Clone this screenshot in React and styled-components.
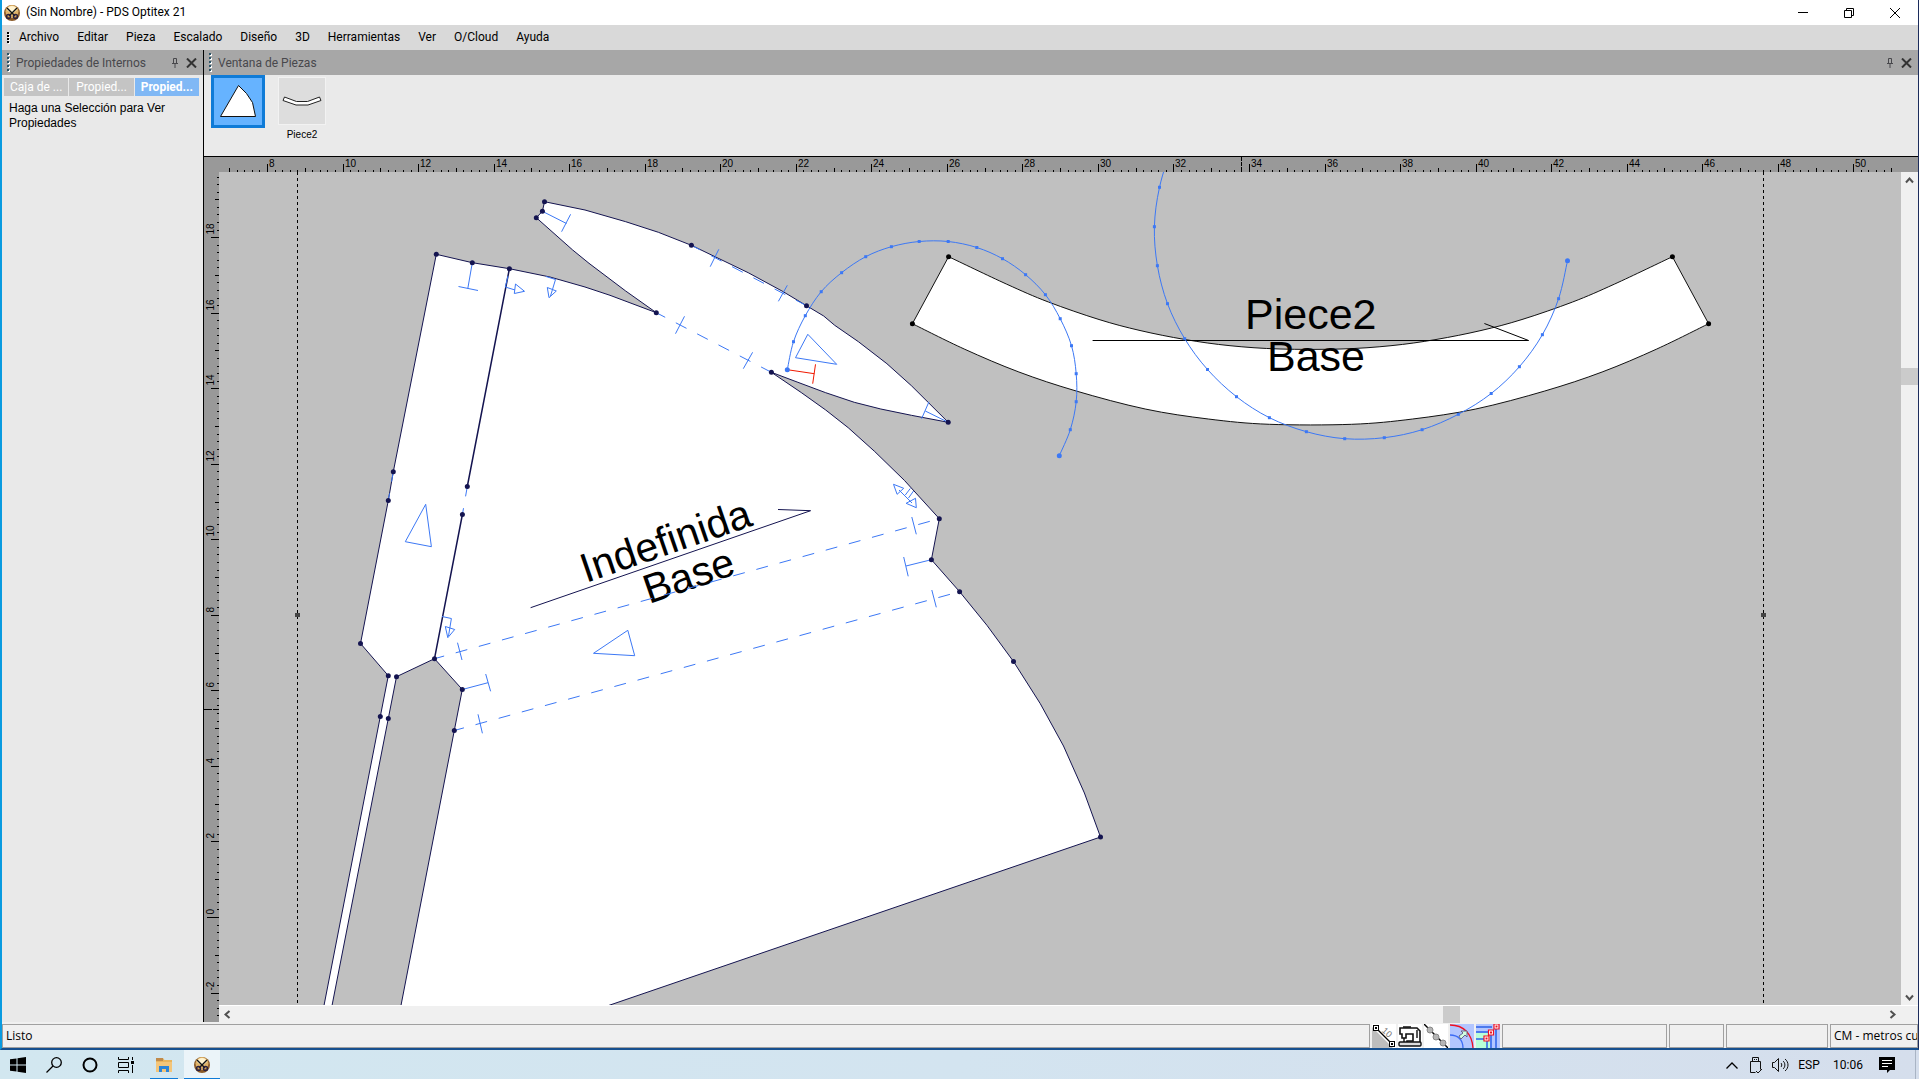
import styled, { createGlobalStyle } from 'styled-components'

const colors = {
    navy: '#141450',
    blue: '#3c78f5',
    canvas: '#c0c0c0',
    ruler: '#999999',
    panel: '#e9e9e9',
    bar: '#d9d9d9',
    header: '#a7a7a7',
    headerText: '#48484c',
    scroll: '#f0f0f0',
}

const GlobalStyle = createGlobalStyle`
    * {
        box-sizing: border-box;
    }
    body {
        margin: 0;
        overflow: hidden;
        font-family: Roboto, 'Open Sans', sans-serif;
        font-size: 12px;
        color: #000;
    }
    button {
        margin: 0;
        padding: 0;
        border: none;
        background: none;
        font: inherit;
        color: inherit;
    }
    svg {
        display: block;
    }
`

const Desktop = styled.div`
    display: flex;
    flex-direction: column;
    height: 100vh;
`

const Window = styled.div`
    flex: 1;
    min-height: 0;
    display: flex;
    flex-direction: column;
    border-left: 2px solid #0a9be0;
    border-right: 1px solid #1c2c5c;
    border-bottom: 2px solid #17508f;
    background: ${colors.scroll};
`

const TitleBar = styled.header`
    display: flex;
    align-items: center;
    height: 25px;
    padding-left: 2px;
    background: #fff;
`

const Title = styled.h1`
    flex: 1;
    margin: 0 0 0 6px;
    font-size: 12px;
    font-weight: 400;
    line-height: 25px;
`

const WindowButton = styled.button`
    width: 46px;
    height: 25px;
    display: flex;
    align-items: center;
    justify-content: center;
`

const MenuBar = styled.nav`
    display: flex;
    align-items: center;
    height: 25px;
    padding-left: 4px;
    background: ${colors.bar};
`

const MenuItem = styled.button`
    padding: 0 9px;
    line-height: 25px;
`

const Body = styled.main`
    flex: 1;
    min-height: 0;
    display: flex;
`

const SidePanel = styled.aside`
    width: 201px;
    background: ${colors.panel};
`

const PanelHeader = styled.div`
    display: flex;
    align-items: center;
    height: 25px;
    padding: 0 3px 0 4px;
    background: ${colors.header};
    color: ${colors.headerText};
`

const PanelTitle = styled.h2`
    flex: 1;
    margin: 0 0 0 6px;
    font-size: 12px;
    font-weight: 400;
    white-space: nowrap;
`

const PanelButton = styled.button`
    display: flex;
    align-items: center;
    justify-content: center;
    width: 17px;
    height: 17px;
    color: ${colors.headerText};
`

const Tabs = styled.div`
    display: flex;
    gap: 1px;
    padding: 3px 4px 0 2px;
`

const Tab = styled.button`
    flex: 1;
    height: 18px;
    line-height: 18px;
    color: #fff;
    background: ${({ $active }) => ($active ? '#80b8f5' : '#c4c4c4')};
    font-weight: ${({ $active }) => ($active ? 700 : 400)};
`

const Hint = styled.p`
    margin: 5px 7px;
    font-family: 'Liberation Sans', Arial, sans-serif;
    font-size: 12px;
    line-height: 15px;
`

const WorkArea = styled.section`
    flex: 1;
    min-width: 0;
    display: flex;
    flex-direction: column;
    border-left: 1px solid #000;
`

const PieceStrip = styled.div`
    display: flex;
    gap: 13px;
    height: 82px;
    padding-left: 7px;
    background: #eaeaea;
    border-bottom: 1px solid #000;
`

const PieceButton = styled.button`
    display: flex;
    flex-direction: column;
    align-items: center;
    align-self: flex-start;
    gap: 4px;
    padding-top: ${({ $active }) => ($active ? 0 : 2)}px;
    font-family: 'Liberation Sans', Arial, sans-serif;
    font-size: 10px;
    line-height: 12px;
`

const Thumb = styled.span`
    display: block;
    width: ${({ $active }) => ($active ? 54 : 48)}px;
    height: ${({ $active }) => ($active ? 53 : 48)}px;
    border: ${({ $active }) => ($active ? '3px solid #0f7bd7' : '1px solid #f2f2f2')};
    background: ${({ $active }) => ($active ? '#66b3ff' : '#dddddd')};
`

const Board = styled.div`
    flex: 1;
    min-height: 0;
    display: grid;
    grid-template-columns: 15px 1fr 17px;
    grid-template-rows: 15px 1fr 17px;
    background: ${colors.ruler};
`

const TopRuler = styled.div`
    grid-column: 1 / 4;
    overflow: hidden;
`

const LeftRuler = styled.div`
    grid-row: 2 / 4;
    overflow: hidden;
`

const Canvas = styled.div`
    min-width: 0;
    min-height: 0;
    overflow: hidden;
    background: ${colors.canvas};
`

const ScrollColumn = styled.div`
    display: flex;
    flex-direction: column;
    background: ${colors.scroll};
`

const ScrollRow = styled.div`
    display: flex;
    grid-column: 2 / 4;
    padding-right: 17px;
    background: ${colors.scroll};
    border-top: 1px solid #fff;
`

const ScrollButton = styled.button`
    display: flex;
    align-items: center;
    justify-content: center;
    width: 17px;
    height: 16px;
    color: #555;
`

const Track = styled.div`
    flex: ${({ $grow }) => $grow};
`

const ScrollThumb = styled.div`
    width: 17px;
    height: 17px;
    background: #cbcbcb;
`

const StatusBar = styled.footer`
    display: flex;
    gap: 2px;
    height: 26px;
    padding-top: 2px;
`

const StatusCell = styled.div`
    ${({ $width }) => ($width ? `width: ${$width}px;` : 'flex: 1;')}
    height: 24px;
    padding-left: 3px;
    border: 1px solid #a0a0a0;
    font-family: 'Open Sans', sans-serif;
    line-height: 22px;
    white-space: nowrap;
    overflow: hidden;
`

const StatusButton = styled.button`
    width: 24px;
    height: 24px;
    background: #fff;
`

const Taskbar = styled.nav`
    display: flex;
    height: 29px;
    background: linear-gradient(90deg, #d2e7f0, #d3e4f0 50%, #d5deec);
`

const TaskButton = styled.button`
    display: flex;
    align-items: center;
    justify-content: center;
    width: ${({ $width }) => $width || 36}px;
    height: 29px;
    padding-top: 1px;
    background-color: ${({ $active }) => ($active ? '#ebf4f9' : 'transparent')};
    background-image: linear-gradient(#0f7bd7, #0f7bd7);
    background-repeat: no-repeat;
    background-position: bottom center;
    background-size: ${({ $line }) => $line || 0}px 1px;
`

const TaskLeft = styled.div`
    flex: 1;
    display: flex;
`

const TaskRight = styled.div`
    display: flex;
    gap: 4px;
    margin-right: 3px;
    padding-right: 13px;
    border-right: 1px solid #a9b4c4;
`

const menus = ['Archivo', 'Editar', 'Pieza', 'Escalado', 'Diseño', '3D', 'Herramientas', 'Ver', 'O/Cloud', 'Ayuda']

const AppIcon = () => (
    <svg width="16" height="16" viewBox="0 0 16 16">
        <circle cx="8" cy="8" r="8" fill="#8a5a28" />
        <circle cx="8" cy="6.500" r="6.500" fill="#dfb268" />
        <path d="M8 1C5 1 3 3 3 5l5 4 5-4c0-2-2-4-5-4z" fill="#fff3cf" />
        <path d="M3 3l8 8M13 3l-8 8" stroke="#111" strokeWidth="1.400" />
        <circle cx="4.500" cy="11.500" r="2" fill="none" stroke="#2b2140" strokeWidth="1.400" />
        <circle cx="11.500" cy="11.500" r="2" fill="none" stroke="#2b2140" strokeWidth="1.400" />
    </svg>
)

const Grip = ({ dark }) => (
    <svg width="4" height="19" viewBox="0 0 4 19" shapeRendering="crispEdges">
        {(dark ? [5, 8, 11, 14] : [1, 5, 9, 13, 17]).map((y) => (
            <g key={y}>
                <rect x="2" y={y} width="2" height="2" fill="#fff" />
                <rect x="1" y={y - 1} width="2" height="2" fill={dark ? '#000' : '#2b5468'} />
            </g>
        ))}
    </svg>
)

const Pin = () => (
    <svg width="8" height="11" viewBox="0 0 8 11" fill="none" stroke="currentColor">
        <path d="M2.500 6V1.500h3V6M1 6.500h6M4 7v4" />
    </svg>
)

const Cross = () => (
    <svg width="11" height="10" viewBox="0 0 11 10" stroke="#333" strokeWidth="2">
        <path d="M1 .500l9 9M10 .500l-9 9" />
    </svg>
)

const Arrow = ({ turn }) => (
    <svg width="9" height="9" viewBox="0 0 9 9">
        <path d="M1 6.500l3.500-4 3.500 4" transform={`rotate(${turn} 4.5 4.5)`} fill="none" stroke="#505050" strokeWidth="2" />
    </svg>
)

// position of a centimetre mark on screen
const UNIT = 37.77
const toX = (cm) => 267.5 + (cm - 8) * UNIT
const toY = (cm) => 917.5 - cm * UNIT

const tickSteps = (from, to) => {
    const steps = []
    for (let i = from * 5; i <= to * 5; i++) steps.push(i)
    return steps
}

const tickSize = (i) => (i % 10 === 0 ? 8 : i % 5 === 0 ? 4 : 2)

const RulerX = () => (
    <svg width="100%" height="15" fontFamily="Liberation Sans, Arial, sans-serif" fontSize="10">
        <g transform="translate(-204 -157)">
            {tickSteps(7, 51).map((i) => (
                <g key={i}>
                    <path d={`M${Math.floor(toX(i / 5)) + 0.5} 172v-${tickSize(i)}`} stroke="#000" />
                    {i % 10 === 0 && <text x={Math.floor(toX(i / 5)) + 2} y="167">{i / 5}</text>}
                </g>
            ))}
            <path d="M1241.500 157v15" stroke="#000" strokeDasharray="4 1" />
        </g>
    </svg>
)

const RulerY = () => (
    <svg width="15" height="100%" fontFamily="Liberation Sans, Arial, sans-serif" fontSize="10">
        <g transform="translate(-204 -172)">
            {tickSteps(-3, 20).filter((i) => toY(i / 5) > 174).map((i) => {
                const y = Math.floor(toY(i / 5)) + 0.5
                return (
                    <g key={i}>
                        <path d={`M219 ${y}h-${i === 0 ? 12 : tickSize(i)}`} stroke="#000" />
                        {i % 10 === 0 && <text transform={`translate(214 ${y - 3}) rotate(-90)`}>{i / 5}</text>}
                    </g>
                )
            })}
            <path d="M204 709.500h15" stroke="#000" strokeDasharray="8 1" />
        </g>
    </svg>
)

const line = (points) => points.map((p) => p.join(' ')).join(' L')

// smooth path that goes through every point
const spline = (pts) => {
    let d = `M${pts[0]}`
    for (let i = 0; i < pts.length - 1; i++) {
        const a = pts[i - 1] || pts[i]
        const b = pts[i]
        const c = pts[i + 1]
        const e = pts[i + 2] || c
        d += `C${b[0] + (c[0] - a[0]) / 6} ${b[1] + (c[1] - a[1]) / 6} ${c[0] - (e[0] - b[0]) / 6} ${c[1] - (e[1] - b[1]) / 6} ${c[0]} ${c[1]}`
    }
    return d
}

const outline = [
    [436.3, 254.3], [472.3, 262.7], [509.4, 268.7], [550, 277], [585, 287], [610, 295.3], [656.3, 312.7],
    [625.7, 291], [589, 263.3], [572.7, 250], [536.3, 217.7], [542.4, 211.3], [544.5, 201.7],
    [585, 210], [625.7, 221.7], [658.4, 232.3], [691.4, 245.3], [748.2, 272.7], [782.9, 291.5], [806.5, 305.7],
    [823.7, 316], [834.7, 325.3], [858.4, 341.7], [886.9, 363.7], [911.4, 385.7], [948.2, 422.3],
    [911.4, 415.3], [880.8, 409], [854.3, 402.3], [825.7, 392.7], [797.1, 382], [771.4, 372.3],
    [801.2, 392.5], [825.7, 410], [848.2, 427.7], [874.7, 451.5], [904.5, 480.5], [939.3, 518.7],
    [931.4, 559.7], [959.6, 591.7], [987, 625.4], [1013.5, 661.5], [1040.3, 703.7], [1063.5, 746],
    [1084.4, 793], [1100.5, 837], [610, 1005], [550, 1026], [397, 1026],
    [454.3, 730.5], [462.3, 689.5], [434.5, 658.7], [396.5, 676.7], [388.3, 718.5], [328, 1026],
    [320, 1026], [380.3, 716.5], [388.3, 675.7], [360.5, 643.5], [388.3, 500.5], [393.3, 471.7],
]

const nodes = [
    [436.3, 254.3], [472.3, 262.7], [509.4, 268.7], [656.3, 312.7], [536.3, 217.7], [542.4, 211.3],
    [544.5, 201.7], [691.4, 245.3], [806.5, 305.7], [948.2, 422.3], [771.4, 372.3], [939.3, 518.7],
    [931.4, 559.7], [959.6, 591.7], [1013.5, 661.5], [1100.5, 837], [454.3, 730.5], [462.3, 689.5],
    [434.5, 658.7], [396.5, 676.7], [388.3, 718.5], [380.3, 716.5], [388.3, 675.7], [360.5, 643.5],
    [388.3, 500.5], [393.3, 471.7], [467.3, 486.5], [462.4, 514.5],
]

// the band is symmetric, only its left half is listed
const MIDDLE = 1310.5
const mirror = (half) => [...half, ...half.map(([x, y]) => [2 * MIDDLE - x, y]).reverse()]

const bandTop = mirror([
    [948.6, 256.7], [1006.3, 284], [1048.4, 302], [1099, 319.5], [1140, 330.5], [1185, 339.5], [1230, 345.7], [1280, 349],
])
const bandBottom = mirror([
    [912.4, 323.7], [964.2, 349], [1018.9, 372], [1076.2, 391], [1145.2, 409], [1208.3, 419], [1269.4, 424.3],
])
const bandCorners = [bandTop[0], bandTop[bandTop.length - 1], bandBottom[0], bandBottom[bandBottom.length - 1]]
const bandPath = `${spline(bandTop)}L${spline([...bandBottom].reverse()).slice(1)}Z`

const arcSmall = [
    [787.3, 369.7], [793.5, 341.7], [805.3, 315.7], [821.2, 291.7], [841.6, 272.7], [865.7, 256.7], [891.4, 246.7],
    [919.2, 241.5], [948.2, 241.5], [976.8, 247.5], [1002.5, 258.7], [1025.6, 274.7], [1045.4, 294.7], [1060.2, 318.7],
    [1071.5, 345.7], [1076.2, 373.7], [1076.2, 401.7], [1070.3, 429.7], [1059.3, 455.7],
]
const arcLarge = [
    [1172, 145], [1159.5, 187.3], [1154.4, 226.7], [1157.4, 265.7], [1167.5, 303.7], [1184.7, 338.7], [1207.5, 369.5],
    [1236.5, 396.7], [1269.4, 417.7], [1306.4, 431.7], [1344.7, 438.7], [1384.3, 437.7], [1422.1, 429.7],
    [1458.3, 414.3], [1491.2, 393.5], [1519.4, 366.7], [1542.4, 334.7], [1558.6, 298.7], [1567.5, 260.7],
]

const folds = [
    'M656.3 312.7L771.4 372.3',
    'M691.4 245.3L806.5 305.7',
    'M434.5 658.7L939.3 518.7',
    'M454.3 730.5L959.6 591.7',
    'M467.3 486.5L462.4 514.5',
    'M393.3 471.7L388.3 500.5',
]

// notches: stem and bar, or only the bar where it crosses a fold
const notches = [
    'M542.4 211.3L566.5 223.5M570.6 214.300L561.6 231.700',
    'M472.3 262.7L467.8 288.500M458.5 286.500L478 290.500',
    'M948.2 422.3L925.3 411M929 401.700L921.600 418.700',
    'M684.5 316.300L675.500 333.700M752.600 352.300L743.300 368.700',
    'M718.800 249.300L710.200 266.700M787.300 285.300L778.400 301.300',
    'M457.500 642.700L462 660M478 714.300L482.400 733.300',
    'M462.300 689.500L488 682.700M485.700 674L490.600 691.300',
    'M911.800 517L916.300 534.300M931.800 590L936.300 607.300',
    'M931.400 559.700L906 566M903.700 557L908.200 576.300',
]

const marks = [
    'M807.8 334.3L795.5 357.7L836.7 364.3Z',
    'M425.7 504.3L405.3 541.7L431.4 546.7Z',
    'M627.8 630.3L593.5 653.3L634.7 655.7Z',
    'M508 276L505.300 287L515 290M515.500 284L524.500 291.300L514.300 293.500Z',
    'M546 276.500L555.500 279.500L550.500 296M547.300 287.500L556.300 291L549 297.700Z',
    'M442 616.500L451.400 618.500L448.500 636M445.300 626.500L454.700 629.500L447.800 637.700Z',
    'M893.500 484.300L903.700 488.300L897.100 494.300ZM916.300 507.700L915.500 498.300L906.100 503.300ZM899 490L912 503M905.300 495L910.300 488.500M908.500 498L913.500 491',
]

const Drawing = () => (
    <svg width="100%" height="100%" fontFamily="Liberation Sans, Arial, sans-serif">
        <g transform="translate(-219 -172)" fill="none">
            <path d="M297.500 172V1005M1763.500 172V1005" stroke="#000" strokeDasharray="3 3" />
            <path d="M295 613h5v4h-5zM1761 613h5v4h-5z" fill="#444" />

            <path d={`M${line(outline)}Z`} fill="#fff" stroke={colors.navy} />
            <path d="M509.4 268.7L467.3 486.5M462.4 514.5L434.5 658.7" stroke={colors.navy} strokeWidth="1.500" />

            <path d={bandPath} fill="#fff" stroke="#111" />
            {bandCorners.map(([x, y]) => <circle key={x} cx={x} cy={y} r="2.500" fill="#000" />)}

            <path d="M530.600 607.700L810.600 510.700L778 509.500" stroke={colors.navy} />
            <text transform="translate(586 583) rotate(-19)" fontSize="41" fill="#000">Indefinida</text>
            <text transform="translate(649 604) rotate(-19)" fontSize="41" fill="#000">Base</text>
            <path d="M1092.600 340.500H1528.600L1484.400 323.500" stroke="#000" />
            <text x="1245" y="329" fontSize="43" fill="#000">Piece2</text>
            <text x="1267" y="371" fontSize="43" fill="#000">Base</text>

            <g stroke={colors.blue}>
                {folds.map((d) => <path key={d} d={d} strokeDasharray="12 12" strokeDashoffset="2" />)}
                {notches.map((d) => <path key={d} d={d} />)}
                {marks.map((d) => <path key={d} d={d} />)}
                <path d={spline(arcSmall)} />
                <path d={spline(arcLarge)} />
            </g>
            <path d="M787.300 369.700L814.300 373.700M815.500 364.300L812.700 383.700" stroke="#f01800" />

            {nodes.map(([x, y]) => <circle key={`${x} ${y}`} cx={x} cy={y} r="2.500" fill={colors.navy} />)}
            {[...arcSmall, ...arcLarge].map(([x, y]) => (
                <rect key={`${x} ${y}`} x={x - 1.5} y={y - 1.5} width="3" height="3" fill={colors.blue} />
            ))}
            {[arcSmall[0], arcSmall[18], arcLarge[18]].map(([x, y]) => (
                <circle key={x} cx={x} cy={y} r="2.500" fill={colors.blue} />
            ))}
        </g>
    </svg>
)

const statusIcons = [
    {
        name: 'Medidas',
        art: (
            <>
                <path d="M0 3l21 21H0z" fill="#bdbdbd" />
                <path d="M4 4l16 16" stroke="#000" strokeWidth="1.300" />
                <path d="M1 1h6v6H1zM17 17h6v6h-6z" fill="#000" />
                <path d="M2 2h4v4H2zM18 18h4v4h-4z" fill="#fff" />
                <path d="M3 3h2v2H3zM19 19h2v2h-2z" fill="#000" />
                <text x="9" y="8" fontSize="9" fontFamily="Liberation Sans, Arial, sans-serif" fill="#777" transform="rotate(42 10 8)">10</text>
            </>
        ),
    },
    {
        name: 'Costura',
        art: (
            <>
                <path d="M2 10V4h17l3 3v13H9v-3h6v-7H8v4H4v-4z" fill="#fff" stroke="#111" strokeWidth="1.600" />
                <path d="M5 3h8M6 14v6M19 6v8" stroke="#111" strokeWidth="1.400" />
                <rect x="1" y="18" width="22" height="4" rx="1" fill="#ddd" stroke="#111" strokeWidth="1.400" />
            </>
        ),
    },
    {
        name: 'Puntos',
        art: (
            <>
                <path d="M0 0l24 24" stroke="#000" strokeWidth="1.400" />
                {[[6, 6], [12, 13], [19, 19]].map(([x, y]) => (
                    <circle key={x} cx={x} cy={y} r="3" fill="#b5b5b5" stroke="#888" />
                ))}
            </>
        ),
    },
    {
        name: 'Curvas',
        art: (
            <>
                <path d="M0 0h24v24H0z" fill="#b3c6ff" />
                <path d="M0 1c14 0 22 9 23 23" fill="none" stroke="#f01020" strokeWidth="1.300" />
                <path d="M0 11c8 0 13 5 13 13" fill="none" stroke="#3c6cf5" strokeWidth="1.300" />
                <path d="M10 14l-1-2 4-3-2-2h6v6l-2-2-4 4z" fill="#d0ffe0" stroke="#668" />
            </>
        ),
    },
    {
        name: 'Ajuste',
        art: (
            <>
                <path d="M0 0h24v24H0z" fill="#b3c6ff" />
                <path d="M0 9h14v15H0z" fill="#b8ffd8" />
                <path d="M0 3h16M0 8h13M0 15h9M11 16v8M15 10v14M20 5v19" stroke="#2c62e8" strokeWidth="1.500" />
                <path d="M18 0h5v5h-5zM12.500 6h5v5h-5zM8 12h5v5H8z" fill="#fff" stroke="#f01020" strokeWidth="1.200" />
                <path d="M19.500 1.500h2v2h-2zM14 7.500h2v2h-2zM9.500 13.500h2v2h-2z" fill="#f01020" />
            </>
        ),
    },
]

const App = () => (
    <Desktop>
        <GlobalStyle />
        <Window>
            <TitleBar>
                <AppIcon />
                <Title>(Sin Nombre) - PDS Optitex 21</Title>
                <WindowButton aria-label="Minimizar">
                    <svg width="10" height="10"><path d="M0 4.500h10" stroke="#000" /></svg>
                </WindowButton>
                <WindowButton aria-label="Restaurar">
                    <svg width="10" height="10" fill="none" stroke="#000"><path d="M.5 2.500h7v7h-7zM2.500 2V.5h7v7H8" /></svg>
                </WindowButton>
                <WindowButton aria-label="Cerrar">
                    <svg width="10" height="10" stroke="#000"><path d="M0 0l10 10M10 0L0 10" /></svg>
                </WindowButton>
            </TitleBar>
            <MenuBar>
                <Grip dark />
                {menus.map((name) => <MenuItem key={name}>{name}</MenuItem>)}
            </MenuBar>
            <Body>
                <SidePanel>
                    <PanelHeader>
                        <Grip />
                        <PanelTitle>Propiedades de Internos</PanelTitle>
                        <PanelButton aria-label="Fijar"><Pin /></PanelButton>
                        <PanelButton aria-label="Cerrar panel"><Cross /></PanelButton>
                    </PanelHeader>
                    <Tabs>
                        <Tab>Caja de ...</Tab>
                        <Tab>Propied...</Tab>
                        <Tab $active>Propied...</Tab>
                    </Tabs>
                    <Hint>Haga una Selección para Ver Propiedades</Hint>
                </SidePanel>
                <WorkArea>
                    <PanelHeader>
                        <Grip />
                        <PanelTitle>Ventana de Piezas</PanelTitle>
                        <PanelButton aria-label="Fijar"><Pin /></PanelButton>
                        <PanelButton aria-label="Cerrar panel"><Cross /></PanelButton>
                    </PanelHeader>
                    <PieceStrip>
                        <PieceButton $active aria-label="Pieza 1">
                            <Thumb $active>
                                <svg width="48" height="47" fill="#fff" stroke="#111">
                                    <path d="M24.500 7.500l8 8 6 9 3 14H6.500z" />
                                </svg>
                            </Thumb>
                        </PieceButton>
                        <PieceButton>
                            <Thumb>
                                <svg width="46" height="46" fill="#fff" stroke="#222">
                                    <path d="M5.500 19l12 4.500h11l12-4.500 1.500 3.500-13 4.500H17L4 22.500z" />
                                </svg>
                            </Thumb>
                            Piece2
                        </PieceButton>
                    </PieceStrip>
                    <Board>
                        <TopRuler><RulerX /></TopRuler>
                        <LeftRuler><RulerY /></LeftRuler>
                        <Canvas><Drawing /></Canvas>
                        <ScrollColumn>
                            <ScrollButton aria-label="Arriba"><Arrow turn={0} /></ScrollButton>
                            <Track $grow={180} />
                            <ScrollThumb />
                            <Track $grow={602} />
                            <ScrollButton aria-label="Abajo"><Arrow turn={180} /></ScrollButton>
                        </ScrollColumn>
                        <ScrollRow>
                            <ScrollButton aria-label="Izquierda"><Arrow turn={270} /></ScrollButton>
                            <Track $grow={1207} />
                            <ScrollThumb />
                            <Track $grow={424} />
                            <ScrollButton aria-label="Derecha"><Arrow turn={90} /></ScrollButton>
                        </ScrollRow>
                    </Board>
                </WorkArea>
            </Body>
            <StatusBar>
                <StatusCell>Listo</StatusCell>
                {statusIcons.map(({ name, art }) => (
                    <StatusButton key={name} aria-label={name}>
                        <svg width="24" height="24" viewBox="0 0 24 24">{art}</svg>
                    </StatusButton>
                ))}
                <StatusCell $width={165} />
                <StatusCell $width={55} />
                <StatusCell $width={102} />
                <StatusCell $width={88}>CM - metros cu</StatusCell>
            </StatusBar>
        </Window>
        <Taskbar>
            <TaskLeft>
                <TaskButton aria-label="Inicio">
                    <svg width="16" height="16"><path d="M0 2.300L6.500 1.400V7.500H0zM7.500 1.200L16 0v7.500H7.500zM0 8.500h6.500v6.100L0 13.700zM7.500 8.500H16V16l-8.500-1.200z" /></svg>
                </TaskButton>
                <TaskButton aria-label="Buscar">
                    <svg width="16" height="16" fill="none" stroke="#000" strokeWidth="1.300"><circle cx="10.500" cy="5.500" r="4.800" /><path d="M7 9L.5 15.500" /></svg>
                </TaskButton>
                <TaskButton aria-label="Cortana">
                    <svg width="16" height="16" fill="none" stroke="#000" strokeWidth="2"><circle cx="8" cy="8" r="6.500" /></svg>
                </TaskButton>
                <TaskButton aria-label="Vista de tareas">
                    <svg width="16" height="16" fill="none" stroke="#000"><path d="M.5 0v2.500h10V0M.5 16v-2.500h10V16M.5 5.500h10v5H.5zM14.500 0v3M14.500 8v8" /><path d="M13 4h3v3h-3z" fill="#000" stroke="none" /></svg>
                </TaskButton>
                <TaskButton $width={40} $line={28} aria-label="Explorador de archivos">
                    <svg width="16" height="14"><path d="M0 0h7l1.500 2H16v12H0z" fill="#e9b45c" /><path d="M0 4h16v10H0z" fill="#f3c57a" /><path d="M0 0h7v3H0z" fill="#c08a4a" /><path d="M3 14V8h10v6h-3v-3H6v3z" fill="#2b84d8" /></svg>
                </TaskButton>
                <TaskButton $active $line={36} aria-label="PDS Optitex 21"><AppIcon /></TaskButton>
            </TaskLeft>
            <TaskRight>
                <TaskButton $width={20} aria-label="Iconos ocultos">
                    <svg width="12" height="7" fill="none" stroke="#000" strokeWidth="1.300"><path d="M.5 6.500L6 1l5.500 5.500" /></svg>
                </TaskButton>
                <TaskButton $width={20} aria-label="USB">
                    <svg width="12" height="17" fill="none" stroke="#111"><path d="M2.500 4.500V.5h6v4M.5 4.500h10v8M.5 4.500v11h5M4 2.500h1M6 2.500h1M6 14l2 2 4-4" /></svg>
                </TaskButton>
                <TaskButton $width={20} aria-label="Volumen">
                    <svg width="17" height="14" fill="none" stroke="#111"><path d="M.5 4.500h2l4-4v13l-4-4h-2zM9 5c1 1 1 3 0 4M11 3c2.500 2 2.500 6 0 8M13 1c4 3 4 9 0 12" /></svg>
                </TaskButton>
                <TaskButton $width={30}>ESP</TaskButton>
                <TaskButton $width={40}>10:06</TaskButton>
                <TaskButton $width={30} aria-label="Notificaciones">
                    <svg width="16" height="16"><path d="M0 0h16v13h-5l-3 3v-3H0z" /><path d="M3 3.500h10M3 6.500h10M3 9.500h6" stroke="#fff" /></svg>
                </TaskButton>
            </TaskRight>
        </Taskbar>
    </Desktop>
)

export default App
